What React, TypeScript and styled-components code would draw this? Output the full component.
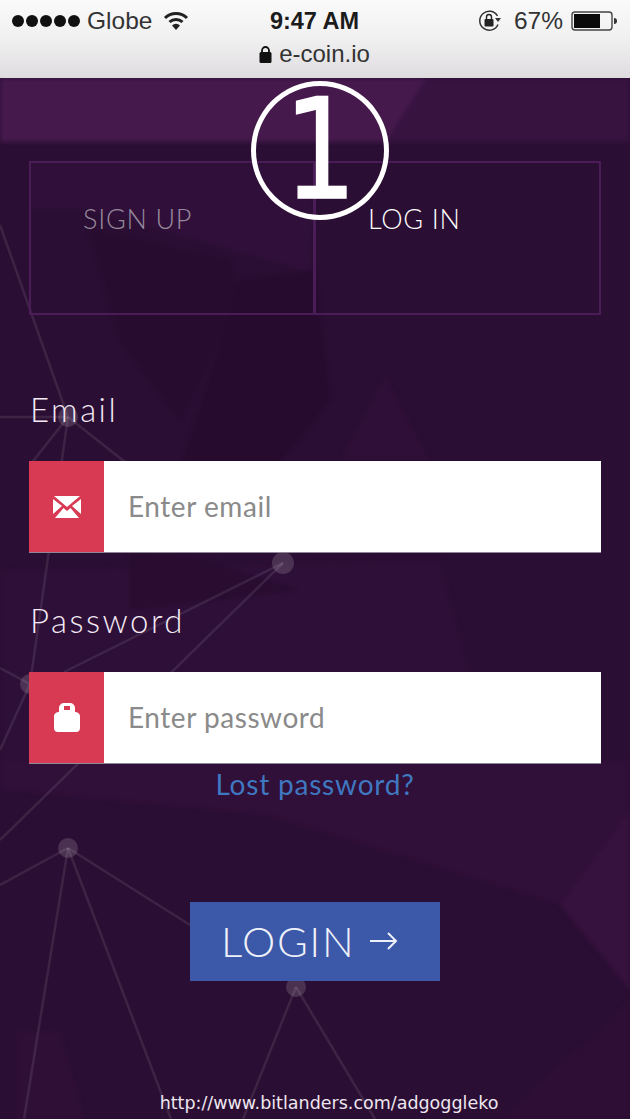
import styled, { createGlobalStyle } from "styled-components";

const GlobalStyle = createGlobalStyle`
  html, body { margin: 0; padding: 0; background: #2b0e33; }
  * { box-sizing: border-box; }
`;

const Page = styled.div`
  width: 630px;
  height: 1119px;
  position: relative;
  overflow: hidden;
  display: flex;
  flex-direction: column;
  font-family: Lato, "Open Sans", sans-serif;
  background: #2b0e33;
`;

const Chrome = styled.header`
  height: 78px;
  flex: none;
  padding: 0 13px 0 12px;
  background: linear-gradient(#fbfafb, #f1f0f1 50%, #dfdcdf);
  color: #222;
  font-family: "Liberation Sans", Arial, sans-serif;
  position: relative;
  z-index: 2;
`;

const StatusRow = styled.div`
  height: 42px;
  display: grid;
  grid-template-columns: 1fr auto 1fr;
  align-items: center;
  font-size: 24.5px;
`;

const StatusLeft = styled.div`
  display: flex;
  align-items: center;
  gap: 7px;
  color: #333;
`;

const StatusRight = styled.div`
  display: flex;
  align-items: center;
  justify-content: flex-end;
  gap: 8px;
  color: #333;
`;

const Dots = styled.div`
  display: flex;
  gap: 2px;
`;

const Dot = styled.span`
  width: 12px;
  height: 12px;
  border-radius: 50%;
  background: #111;
`;

const Clock = styled.div`
  font-weight: 700;
  font-size: 23.5px;
  color: #1c1c1c;
`;

const UrlRow = styled.div`
  display: flex;
  justify-content: center;
  align-items: center;
  gap: 7px;
  font-size: 24px;
  line-height: 24px;
  color: #333;
`;

const Backdrop = styled.svg`
  position: absolute;
  left: 0;
  top: 0;
  width: 630px;
  height: 1119px;
`;

const SoftShapes = styled.g`
  filter: blur(2px);
`;

const CircledOne = styled.div`
  position: absolute;
  left: 251px;
  top: 81px;
  width: 138px;
  height: 139px;
  border: 5px solid #fff;
  border-radius: 50%;
  color: #fff;
  display: flex;
  justify-content: center;
  font-family: "DejaVu Sans", sans-serif;
  font-size: 139px;
  line-height: 128px;
  z-index: 3;
  span {
    display: block;
    transform: scaleX(0.82);
    -webkit-text-stroke: 1.5px #fff;
  }
`;

const Content = styled.main`
  position: relative;
  z-index: 1;
  flex: 1;
  padding: 83px 29px 0;
  display: flex;
  flex-direction: column;
`;

const Tabs = styled.div`
  height: 154px;
  display: grid;
  grid-template-columns: 282px 1fr;
  border: 2px solid #4c1c58;
`;

const Tab = styled.div<{ $active?: boolean }>`
  padding: 38px 0 0 52px;
  font-size: 27px;
  line-height: 36px;
  letter-spacing: 0.7px;
  font-weight: 300;
  color: ${(p) => (p.$active ? "#fff" : "#978a9c")};
  & + & {
    border-left: 3px solid #4c1c58;
  }
`;

const FieldLabel = styled.label<{ $first?: boolean }>`
  display: block;
  margin-top: ${(p) => (p.$first ? "74px" : "48px")};
  margin-bottom: 31px;
  margin-left: 1px;
  height: 41px;
  font-size: 33px;
  line-height: 41px;
  font-weight: 300;
  letter-spacing: 2.5px;
  color: #f3eaf5;
`;

const Field = styled.div`
  height: 91px;
  display: flex;
  background: #fff;
  box-shadow: 0 1px 0 #8f8697;
`;

const FieldIcon = styled.div`
  width: 75px;
  flex: none;
  background: #d83a54;
  display: flex;
  align-items: center;
  justify-content: center;
`;

const Placeholder = styled.div`
  padding: 0 0 2px 24px;
  display: flex;
  align-items: center;
  font-size: 28px;
  letter-spacing: 0.55px;
  color: #8a8a8a;
`;

const LostLink = styled.a`
  margin-top: 1px;
  text-align: center;
  font-size: 28px;
  line-height: 40px;
  letter-spacing: 0.8px;
  color: #3f78c0;
`;

const LoginButton = styled.button`
  align-self: center;
  margin-top: 98px;
  width: 250px;
  height: 79px;
  padding: 0 0 2px 31px;
  border: 0;
  background: #3c58a8;
  color: #eef1f9;
  font-family: inherit;
  font-size: 42px;
  font-weight: 300;
  letter-spacing: 1.6px;
  display: flex;
  align-items: center;
  gap: 15px;
`;

const Credit = styled.div`
  position: absolute;
  left: 28px;
  right: 0;
  top: 1092px;
  text-align: center;
  font-family: "DejaVu Sans", sans-serif;
  font-size: 17.5px;
  line-height: 22px;
  color: #eee6ef;
  z-index: 3;
`;

const polys: [string, string][] = [
  ["0,78 630,78 630,142 0,142", "#371340"],
  ["0,78 426,78 386,142 0,142", "#45194c"],
  ["30,162 315,162 310,272 230,250 90,210 30,210", "#30103a"],
  ["90,230 230,260 240,300 180,420 120,340", "#280c2f"],
  ["240,280 315,270 330,400 250,500 180,470", "#270b2e"],
  ["340,460 385,375 430,460", "#2f0f37"],
  ["0,570 440,560 500,780 0,790", "#2e0f37"],
  ["200,560 130,552 130,610 300,590", "#290c30"],
  ["0,790 265,815 560,905 630,870 630,760 0,760", "#300f38"],
  ["560,905 630,810 630,990", "#36123e"],
  ["15,1030 60,1030 85,1119 15,1119", "#2f0f36"],
  ["500,1119 630,1000 630,1119", "#2e0e35"],
];

const lines: [number, number, number, number][] = [
  [0, 225, 68, 417],
  [0, 417, 68, 417],
  [68, 417, 30, 465],
  [68, 417, 30, 684],
  [68, 417, 125, 462],
  [283, 563, 64, 672],
  [283, 563, 0, 840],
  [0, 668, 30, 684],
  [30, 684, 0, 750],
  [68, 848, 0, 885],
  [68, 848, 24, 1119],
  [68, 848, 171, 1119],
  [68, 848, 190, 925],
  [296, 987, 243, 1119],
  [296, 987, 375, 1119],
];

const nodes: [number, number, number][] = [
  [68, 417, 10],
  [283, 563, 11],
  [30, 684, 10],
  [68, 848, 10],
  [296, 987, 10],
];

export default function App() {
  return (
    <Page>
      <GlobalStyle />
      <Backdrop viewBox="0 0 630 1119">
        <SoftShapes>
          {polys.map(([points, fill]) => (
            <polygon key={points} points={points} fill={fill} />
          ))}
        </SoftShapes>
        {lines.map(([x1, y1, x2, y2]) => (
          <line key={`${x1}-${y1}-${x2}-${y2}`} x1={x1} y1={y1} x2={x2} y2={y2} stroke="#fff" strokeOpacity={0.09} strokeWidth={2.5} />
        ))}
        {nodes.map(([cx, cy, r]) => (
          <circle key={cx} cx={cx} cy={cy} r={r} fill="#fff" fillOpacity={0.15} />
        ))}
      </Backdrop>
      <Chrome>
        <StatusRow>
          <StatusLeft>
            <Dots>
              {[0, 1, 2, 3, 4].map((i) => (
                <Dot key={i} />
              ))}
            </Dots>
            <span>Globe</span>
            <svg width="26" height="20" viewBox="0 0 26 20" style={{ marginLeft: 4 }}>
              <path d="M2 7 A15.5 15.5 0 0 1 24 7" fill="none" stroke="#222" strokeWidth="3" />
              <path d="M6.5 11 A9.5 9.5 0 0 1 19.5 11" fill="none" stroke="#222" strokeWidth="3" />
              <path d="M13 19 L9 14.5 A5.5 5.5 0 0 1 17 14.5 Z" fill="#222" />
            </svg>
          </StatusLeft>
          <Clock>9:47 AM</Clock>
          <StatusRight>
            <svg width="24" height="24" viewBox="0 0 24 24" style={{ marginRight: 4 }}>
              <path d="M19.5 7 A9.5 9.5 0 1 0 20 15.5" fill="none" stroke="#333" strokeWidth="1.5" />
              <path d="M17 9 L23 9 L20 13 Z" fill="#333" />
              <rect x="6.5" y="10" width="9" height="7.5" rx="1" fill="#222" />
              <path d="M8.5 10 V8 a2.5 2.5 0 0 1 5 0 V10" fill="none" stroke="#222" strokeWidth="1.4" />
            </svg>
            <span>67%</span>
            <svg width="46" height="20" viewBox="0 0 46 20">
              <rect x="1" y="1" width="40" height="18" rx="3" fill="none" stroke="#444" strokeWidth="1.4" />
              <rect x="3" y="3" width="26" height="14" fill="#0a0a0a" />
              <path d="M43 7 a3 3 0 0 1 0 6 Z" fill="#333" />
            </svg>
          </StatusRight>
        </StatusRow>
        <UrlRow>
          <svg width="13" height="17" viewBox="0 0 13 17">
            <rect x="0.5" y="6" width="12" height="11" rx="1.5" fill="#111" />
            <path d="M3 7 V4.5 a3.5 3.5 0 0 1 7 0 V7" fill="none" stroke="#111" strokeWidth="1.8" />
          </svg>
          <span>e-coin.io</span>
        </UrlRow>
      </Chrome>
      <CircledOne>
        <span>1</span>
      </CircledOne>
      <Content>
        <Tabs>
          <Tab>SIGN UP</Tab>
          <Tab $active>LOG IN</Tab>
        </Tabs>
        <FieldLabel $first>Email</FieldLabel>
        <Field>
          <FieldIcon>
            <svg width="28" height="24" viewBox="0 0 28 24">
              <path d="M1 1 H27 L14 12 Z" fill="#fff" />
              <path d="M0 4 L9 11 L0 19 Z M28 4 L19 11 L28 19 Z" fill="#fff" />
              <path d="M2 23 L10.5 13 L14 16 L17.5 13 L26 23 Z" fill="#fff" />
            </svg>
          </FieldIcon>
          <Placeholder>Enter email</Placeholder>
        </Field>
        <FieldLabel>Password</FieldLabel>
        <Field>
          <FieldIcon>
            <svg width="26" height="29" viewBox="0 0 26 29">
              <path
                fillRule="evenodd"
                fill="#fff"
                d="M5 9 V5 a5 5 0 0 1 5 -5 h6 a5 5 0 0 1 5 5 V9 a5 4 0 0 1 5 4 V25 a4 4 0 0 1 -4 4 H4 a4 4 0 0 1 -4 -4 V13 a5 4 0 0 1 5 -4 Z M10 3 V7 H16 V3 Z"
              />
            </svg>
          </FieldIcon>
          <Placeholder>Enter password</Placeholder>
        </Field>
        <LostLink>Lost password?</LostLink>
        <LoginButton>
          <span>LOGIN</span>
          <svg width="28" height="20" viewBox="0 0 28 20">
            <path d="M0 10 H26 M18 2 L26 10 L18 18" fill="none" stroke="#eef1f9" strokeWidth="2" />
          </svg>
        </LoginButton>
      </Content>
      <Credit>http://www.bitlanders.com/adgoggleko</Credit>
    </Page>
  );
}
